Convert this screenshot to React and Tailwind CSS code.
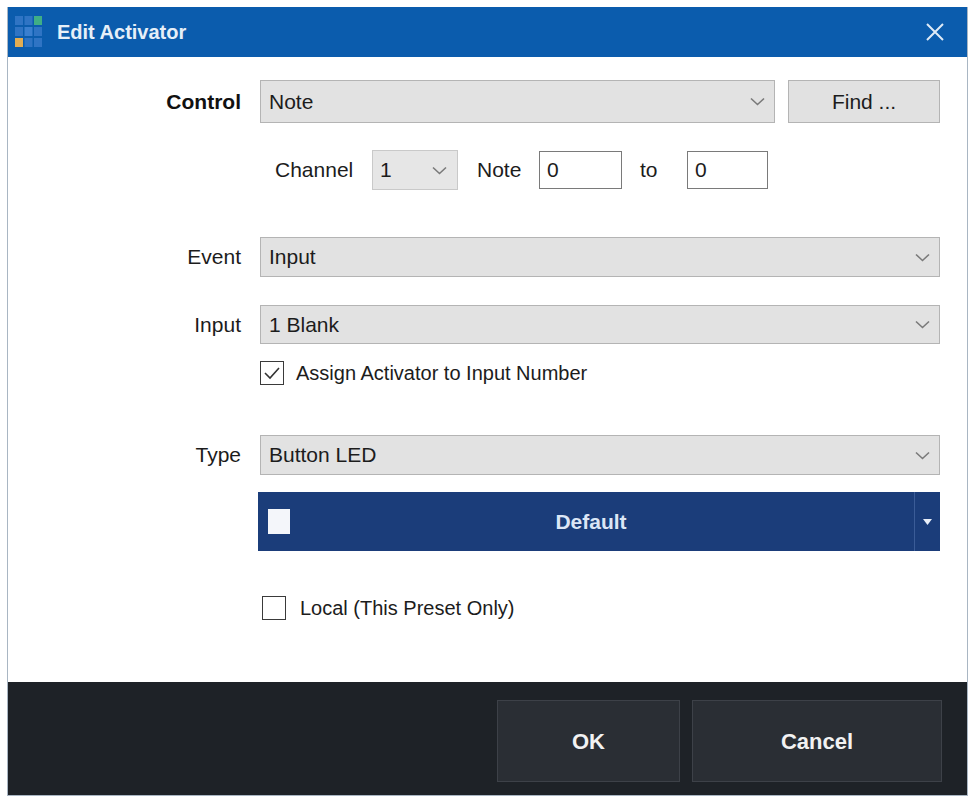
import React from "react";

function Chevron({ className = "" }) {
  return (
    <svg className={className} width="15" height="9" viewBox="0 0 15 9" fill="none">
      <polyline points="1,1.5 7.5,7.5 14,1.5" stroke="#7a7a7a" strokeWidth="1.6" />
    </svg>
  );
}

function Select({ value, className = "" }) {
  return (
    <div className={`flex items-center justify-between bg-[#e2e2e2] border border-[#b4b4b4] pl-[8px] pr-[9px] ${className}`}>
      <span>{value}</span>
      <Chevron />
    </div>
  );
}

function Row({ label, bold, className = "", children }) {
  return (
    <div className={`flex items-center ${className}`}>
      <div className={`w-[233px] text-right ${bold ? "font-bold text-[21px] text-[#111]" : ""}`}>{label}</div>
      <div className="ml-[19px] flex-1 flex items-center h-full">{children}</div>
    </div>
  );
}

function CheckBox({ checked }) {
  return (
    <div className="w-[24px] h-[24px] border border-[#3a3a3a] bg-white flex items-center justify-center">
      {checked && (
        <svg width="18" height="14" viewBox="0 0 18 14" fill="none">
          <polyline points="2,7 7,12 16,2" stroke="#333" strokeWidth="1.6" />
        </svg>
      )}
    </div>
  );
}

function AppIcon() {
  const cells = [
    ["#2f74c4", "#2f74c4", "#3fae86"],
    ["#2f74c4", "#3a7fcf", "#2f74c4"],
    ["#e3ad52", "#2f74c4", "#2f74c4"],
  ];
  return (
    <svg width="28" height="32" viewBox="0 0 28 32">
      {cells.map((row, r) =>
        row.map((c, i) => (
          <rect key={`${r}-${i}`} x={i * 9.5} y={r * 11} width="8" height="9" fill={c} />
        ))
      )}
    </svg>
  );
}

export default function App() {
  return (
    <div className="min-h-screen bg-white pt-[7px] pl-[7px] font-['Liberation_Sans',Arial,sans-serif] text-[21px] text-[#1c1c1c]">
      <div className="w-[961px] flex flex-col border-x border-b border-[#a9b6c3]">
        {/* Title bar */}
        <div className="h-[50px] bg-[#0b5cad] flex items-center pl-[7px] pr-[22px]">
          <AppIcon />
          <span className="ml-[14px] text-[20px] font-bold text-[#e6eff8]">Edit Activator</span>
          <div className="flex-1" />
          <svg width="20" height="20" viewBox="0 0 20 20">
            <path d="M2 2 L18 18 M18 2 L2 18" stroke="#dfeaf6" strokeWidth="2" />
          </svg>
        </div>

        {/* Body */}
        <div className="h-[625px] bg-white pt-[23px] pr-[27px] flex flex-col">
          <Row label="Control" bold className="h-[43px]">
            <Select value="Note" className="w-[515px] h-[43px]" />
            <button className="ml-[13px] w-[152px] h-[43px] bg-[#e1e1e1] border border-[#b4b4b4] text-[21px]">Find ...</button>
          </Row>

          <Row className="mt-[27px] h-[40px]">
            <div className="pl-[15px] flex items-center">
              <span className="w-[97px]">Channel</span>
              <div className="w-[86px] h-[40px] bg-[#e6e6e6] border border-[#c9c9c9] flex items-center justify-between pl-[7px] pr-[10px]">
                <span>1</span>
                <Chevron />
              </div>
              <span className="ml-[19px] w-[62px]">Note</span>
              <div className="w-[83px] h-[38px] border border-[#7a7a7a] bg-white pl-[7px] flex items-center">0</div>
              <span className="ml-[18px] w-[47px]">to</span>
              <div className="w-[81px] h-[38px] border border-[#7a7a7a] bg-white pl-[7px] flex items-center">0</div>
            </div>
          </Row>

          <Row label="Event" className="mt-[47px] h-[40px]">
            <Select value="Input" className="w-full h-[40px]" />
          </Row>

          <Row label="Input" className="mt-[28px] h-[39px]">
            <Select value="1 Blank" className="w-full h-[39px]" />
          </Row>

          <Row className="mt-[16px] h-[25px]">
            <CheckBox checked />
            <span className="ml-[12px] text-[20px]">Assign Activator to Input Number</span>
          </Row>

          <Row label="Type" className="mt-[50px] h-[40px]">
            <Select value="Button LED" className="w-full h-[40px]" />
          </Row>

          <Row className="mt-[17px] h-[59px]">
            <div className="w-[682px] h-[59px] bg-[#1b3d7a] flex items-center">
              <div className="ml-[10px] w-[22px] h-[25px] bg-[#f4f6fa]" />
              <div className="flex-1 text-center font-bold text-[21px] text-[#dce6f6] pr-[22px]">Default</div>
              <div className="w-[26px] h-full border-l border-[#3b5c97] flex items-center justify-center">
                <svg width="9" height="6" viewBox="0 0 9 6">
                  <polygon points="0,0 9,0 4.5,6" fill="#e8eef8" />
                </svg>
              </div>
            </div>
          </Row>

          <Row className="mt-[44px] h-[25px]">
            <div className="ml-[2px]">
              <CheckBox />
            </div>
            <span className="ml-[14px] text-[20px]">Local (This Preset Only)</span>
          </Row>
        </div>

        {/* Footer */}
        <div className="h-[113px] bg-[#1e2227] flex justify-end pt-[18px] pr-[25px]">
          <button className="w-[183px] h-[82px] bg-[#2a2e34] border border-[#3d4148] text-[#f2f2f2] font-bold text-[22px]">OK</button>
          <button className="ml-[12px] w-[250px] h-[82px] bg-[#2a2e34] border border-[#3d4148] text-[#f2f2f2] font-bold text-[22px]">Cancel</button>
        </div>
      </div>
    </div>
  );
}
